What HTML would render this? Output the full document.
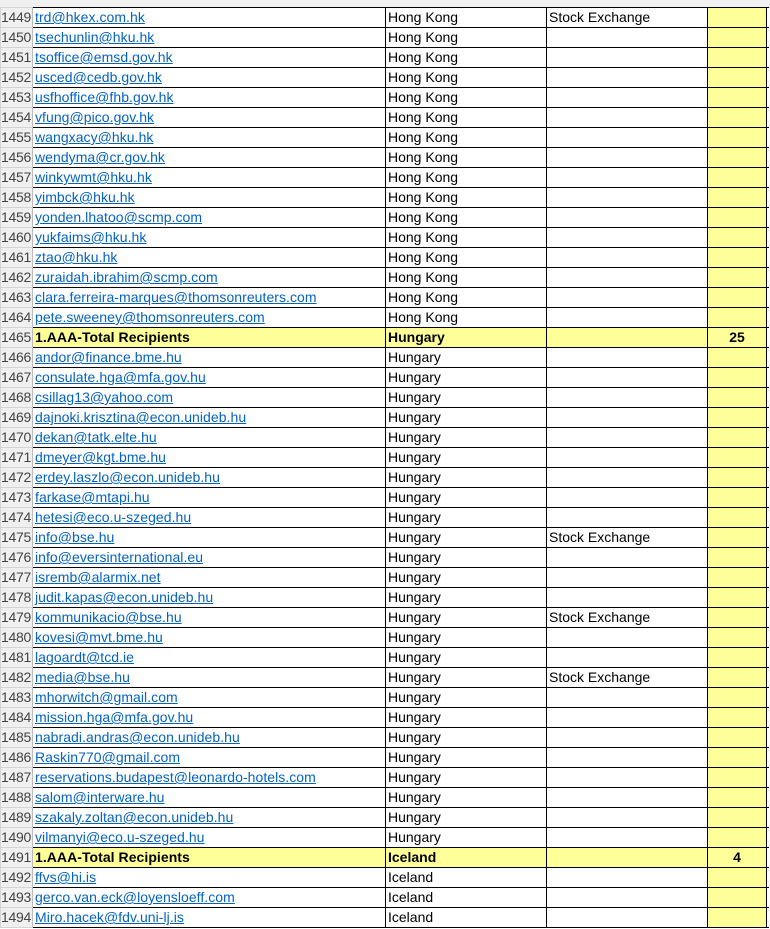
<!DOCTYPE html>
<html><head><meta charset="utf-8"><style>
html,body{margin:0;padding:0;width:770px;height:929px;overflow:hidden;background:#fff;font-family:"Liberation Sans",Arial,sans-serif;font-size:14px;}
.hdr{position:absolute;left:0;top:0;width:770px;height:7px;background:#f0f0f0;border-bottom:1px solid #d4d4d4;}
table{position:absolute;left:0;top:7px;border-collapse:collapse;table-layout:fixed;}
tr{height:20px;}
td{height:19px;padding:0 0 0 2px;border:1px solid #000;white-space:nowrap;overflow:hidden;line-height:19px;color:#000;}
td.n{width:30px;background:#f0f0f0;color:#444;border:1px solid #d4d4d4;border-right:1px solid #bbb;text-align:right;padding:0 1px 0 0;font-size:14px;letter-spacing:-0.3px;}
td.a{width:350px;letter-spacing:0.05px;}
td.b{width:158px;}
td.c{width:158px;}
td.d{width:58px;background:#ffff99;text-align:center;font-weight:bold;padding:0;}
td.e{width:2px;border-right:none;padding:0;}
a{color:#0563c1;text-decoration:underline;}
tr.t td.a,tr.t td.b,tr.t td.c{background:#ffff99;font-weight:bold;}
</style></head><body>
<div class="hdr"></div>
<table>
<tr><td class="n">1449</td><td class="a"><a>trd@hkex.com.hk</a></td><td class="b">Hong Kong</td><td class="c">Stock Exchange</td><td class="d"></td><td class="e"></td></tr>
<tr><td class="n">1450</td><td class="a"><a>tsechunlin@hku.hk</a></td><td class="b">Hong Kong</td><td class="c"></td><td class="d"></td><td class="e"></td></tr>
<tr><td class="n">1451</td><td class="a"><a>tsoffice@emsd.gov.hk</a></td><td class="b">Hong Kong</td><td class="c"></td><td class="d"></td><td class="e"></td></tr>
<tr><td class="n">1452</td><td class="a"><a>usced@cedb.gov.hk</a></td><td class="b">Hong Kong</td><td class="c"></td><td class="d"></td><td class="e"></td></tr>
<tr><td class="n">1453</td><td class="a"><a>usfhoffice@fhb.gov.hk</a></td><td class="b">Hong Kong</td><td class="c"></td><td class="d"></td><td class="e"></td></tr>
<tr><td class="n">1454</td><td class="a"><a>vfung@pico.gov.hk</a></td><td class="b">Hong Kong</td><td class="c"></td><td class="d"></td><td class="e"></td></tr>
<tr><td class="n">1455</td><td class="a"><a>wangxacy@hku.hk</a></td><td class="b">Hong Kong</td><td class="c"></td><td class="d"></td><td class="e"></td></tr>
<tr><td class="n">1456</td><td class="a"><a>wendyma@cr.gov.hk</a></td><td class="b">Hong Kong</td><td class="c"></td><td class="d"></td><td class="e"></td></tr>
<tr><td class="n">1457</td><td class="a"><a>winkywmt@hku.hk</a></td><td class="b">Hong Kong</td><td class="c"></td><td class="d"></td><td class="e"></td></tr>
<tr><td class="n">1458</td><td class="a"><a>yimbck@hku.hk</a></td><td class="b">Hong Kong</td><td class="c"></td><td class="d"></td><td class="e"></td></tr>
<tr><td class="n">1459</td><td class="a"><a>yonden.lhatoo@scmp.com</a></td><td class="b">Hong Kong</td><td class="c"></td><td class="d"></td><td class="e"></td></tr>
<tr><td class="n">1460</td><td class="a"><a>yukfaims@hku.hk</a></td><td class="b">Hong Kong</td><td class="c"></td><td class="d"></td><td class="e"></td></tr>
<tr><td class="n">1461</td><td class="a"><a>ztao@hku.hk</a></td><td class="b">Hong Kong</td><td class="c"></td><td class="d"></td><td class="e"></td></tr>
<tr><td class="n">1462</td><td class="a"><a>zuraidah.ibrahim@scmp.com</a></td><td class="b">Hong Kong</td><td class="c"></td><td class="d"></td><td class="e"></td></tr>
<tr><td class="n">1463</td><td class="a"><a>clara.ferreira-marques@thomsonreuters.com</a></td><td class="b">Hong Kong</td><td class="c"></td><td class="d"></td><td class="e"></td></tr>
<tr><td class="n">1464</td><td class="a"><a>pete.sweeney@thomsonreuters.com</a></td><td class="b">Hong Kong</td><td class="c"></td><td class="d"></td><td class="e"></td></tr>
<tr class="t"><td class="n">1465</td><td class="a">1.AAA-Total Recipients</td><td class="b">Hungary</td><td class="c"></td><td class="d">25</td><td class="e"></td></tr>
<tr><td class="n">1466</td><td class="a"><a>andor@finance.bme.hu</a></td><td class="b">Hungary</td><td class="c"></td><td class="d"></td><td class="e"></td></tr>
<tr><td class="n">1467</td><td class="a"><a>consulate.hga@mfa.gov.hu</a></td><td class="b">Hungary</td><td class="c"></td><td class="d"></td><td class="e"></td></tr>
<tr><td class="n">1468</td><td class="a"><a>csillag13@yahoo.com</a></td><td class="b">Hungary</td><td class="c"></td><td class="d"></td><td class="e"></td></tr>
<tr><td class="n">1469</td><td class="a"><a>dajnoki.krisztina@econ.unideb.hu</a></td><td class="b">Hungary</td><td class="c"></td><td class="d"></td><td class="e"></td></tr>
<tr><td class="n">1470</td><td class="a"><a>dekan@tatk.elte.hu</a></td><td class="b">Hungary</td><td class="c"></td><td class="d"></td><td class="e"></td></tr>
<tr><td class="n">1471</td><td class="a"><a>dmeyer@kgt.bme.hu</a></td><td class="b">Hungary</td><td class="c"></td><td class="d"></td><td class="e"></td></tr>
<tr><td class="n">1472</td><td class="a"><a>erdey.laszlo@econ.unideb.hu</a></td><td class="b">Hungary</td><td class="c"></td><td class="d"></td><td class="e"></td></tr>
<tr><td class="n">1473</td><td class="a"><a>farkase@mtapi.hu</a></td><td class="b">Hungary</td><td class="c"></td><td class="d"></td><td class="e"></td></tr>
<tr><td class="n">1474</td><td class="a"><a>hetesi@eco.u-szeged.hu</a></td><td class="b">Hungary</td><td class="c"></td><td class="d"></td><td class="e"></td></tr>
<tr><td class="n">1475</td><td class="a"><a>info@bse.hu</a></td><td class="b">Hungary</td><td class="c">Stock Exchange</td><td class="d"></td><td class="e"></td></tr>
<tr><td class="n">1476</td><td class="a"><a>info@eversinternational.eu</a></td><td class="b">Hungary</td><td class="c"></td><td class="d"></td><td class="e"></td></tr>
<tr><td class="n">1477</td><td class="a"><a>isremb@alarmix.net</a></td><td class="b">Hungary</td><td class="c"></td><td class="d"></td><td class="e"></td></tr>
<tr><td class="n">1478</td><td class="a"><a>judit.kapas@econ.unideb.hu</a></td><td class="b">Hungary</td><td class="c"></td><td class="d"></td><td class="e"></td></tr>
<tr><td class="n">1479</td><td class="a"><a>kommunikacio@bse.hu</a></td><td class="b">Hungary</td><td class="c">Stock Exchange</td><td class="d"></td><td class="e"></td></tr>
<tr><td class="n">1480</td><td class="a"><a>kovesi@mvt.bme.hu</a></td><td class="b">Hungary</td><td class="c"></td><td class="d"></td><td class="e"></td></tr>
<tr><td class="n">1481</td><td class="a"><a>lagoardt@tcd.ie</a></td><td class="b">Hungary</td><td class="c"></td><td class="d"></td><td class="e"></td></tr>
<tr><td class="n">1482</td><td class="a"><a>media@bse.hu</a></td><td class="b">Hungary</td><td class="c">Stock Exchange</td><td class="d"></td><td class="e"></td></tr>
<tr><td class="n">1483</td><td class="a"><a>mhorwitch@gmail.com</a></td><td class="b">Hungary</td><td class="c"></td><td class="d"></td><td class="e"></td></tr>
<tr><td class="n">1484</td><td class="a"><a>mission.hga@mfa.gov.hu</a></td><td class="b">Hungary</td><td class="c"></td><td class="d"></td><td class="e"></td></tr>
<tr><td class="n">1485</td><td class="a"><a>nabradi.andras@econ.unideb.hu</a></td><td class="b">Hungary</td><td class="c"></td><td class="d"></td><td class="e"></td></tr>
<tr><td class="n">1486</td><td class="a"><a>Raskin770@gmail.com</a></td><td class="b">Hungary</td><td class="c"></td><td class="d"></td><td class="e"></td></tr>
<tr><td class="n">1487</td><td class="a"><a>reservations.budapest@leonardo-hotels.com</a></td><td class="b">Hungary</td><td class="c"></td><td class="d"></td><td class="e"></td></tr>
<tr><td class="n">1488</td><td class="a"><a>salom@interware.hu</a></td><td class="b">Hungary</td><td class="c"></td><td class="d"></td><td class="e"></td></tr>
<tr><td class="n">1489</td><td class="a"><a>szakaly.zoltan@econ.unideb.hu</a></td><td class="b">Hungary</td><td class="c"></td><td class="d"></td><td class="e"></td></tr>
<tr><td class="n">1490</td><td class="a"><a>vilmanyi@eco.u-szeged.hu</a></td><td class="b">Hungary</td><td class="c"></td><td class="d"></td><td class="e"></td></tr>
<tr class="t"><td class="n">1491</td><td class="a">1.AAA-Total Recipients</td><td class="b">Iceland</td><td class="c"></td><td class="d">4</td><td class="e"></td></tr>
<tr><td class="n">1492</td><td class="a"><a>ffvs@hi.is</a></td><td class="b">Iceland</td><td class="c"></td><td class="d"></td><td class="e"></td></tr>
<tr><td class="n">1493</td><td class="a"><a>gerco.van.eck@loyensloeff.com</a></td><td class="b">Iceland</td><td class="c"></td><td class="d"></td><td class="e"></td></tr>
<tr><td class="n">1494</td><td class="a"><a>Miro.hacek@fdv.uni-lj.is</a></td><td class="b">Iceland</td><td class="c"></td><td class="d"></td><td class="e"></td></tr>
</table>
</body></html>
